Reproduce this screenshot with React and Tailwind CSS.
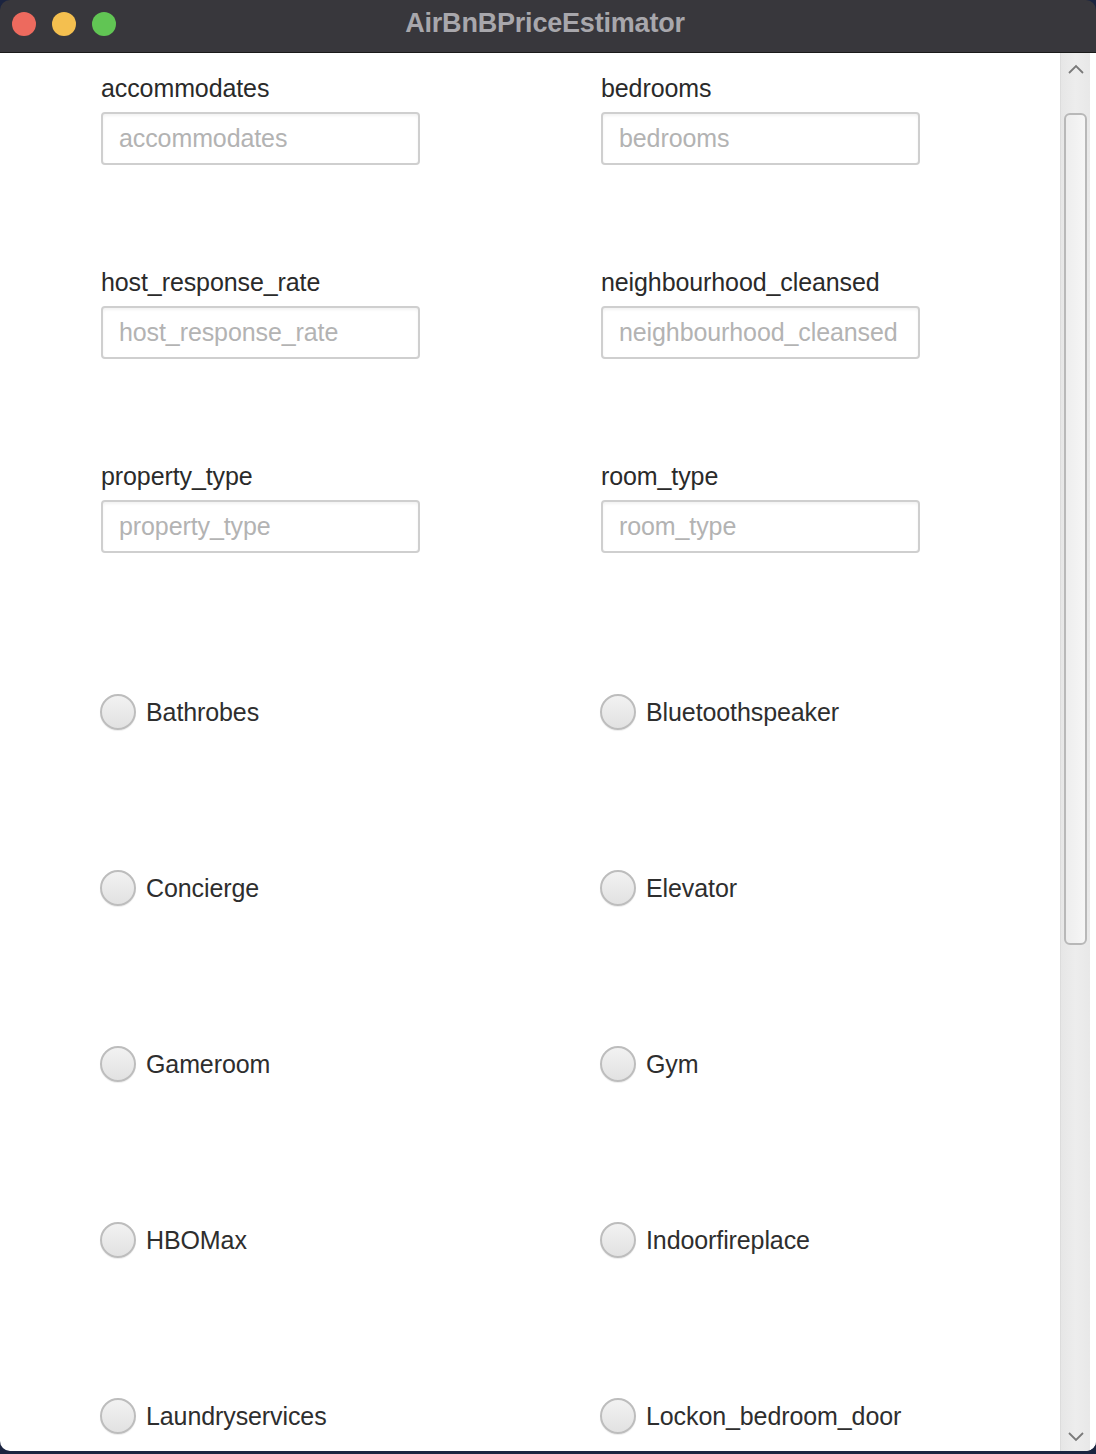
import React from "react";

const fields = [
  ["accommodates", "bedrooms"],
  ["host_response_rate", "neighbourhood_cleansed"],
  ["property_type", "room_type"],
];

const radios = [
  ["Bathrobes", "Bluetoothspeaker"],
  ["Concierge", "Elevator"],
  ["Gameroom", "Gym"],
  ["HBOMax", "Indoorfireplace"],
  ["Laundryservices", "Lockon_bedroom_door"],
];

function Field({ name }) {
  return (
    <div className="flex flex-col w-[500px] shrink-0">
      <div className="h-[28px] leading-[29px] text-[25px] text-[#2a2a2a] tracking-[-0.1px] whitespace-nowrap">{name}</div>
      <div className="mt-[10px] w-[319px] h-[53px] rounded-[4px] border-2 border-[#cfcfcf] bg-white flex items-center pl-[16px] text-[25px] text-[#b3b3b3] tracking-[-0.1px] whitespace-nowrap shadow-[inset_0_2px_3px_rgba(0,0,0,0.05)]">
        {name}
      </div>
    </div>
  );
}

function Radio({ name }) {
  return (
    <div className="flex items-center w-[500px] h-[36px] shrink-0 ml-[-1px] mr-[1px]">
      <div className="w-[36px] h-[36px] rounded-full border-2 border-[#bdbdbd] bg-gradient-to-b from-[#f2f2f2] to-[#e2e2e2] shadow-[0_1px_1px_rgba(0,0,0,0.08)]" />
      <div className="ml-[10px] text-[25px] leading-[38px] text-[#2e2e2e] tracking-[-0.1px] whitespace-nowrap">{name}</div>
    </div>
  );
}

export default function App() {
  return (
    <div className="w-[1096px] h-[1454px] bg-[#1b2440] flex flex-col overflow-hidden" style={{ fontFamily: '"Liberation Sans", Arial, sans-serif' }}>
      <div className="h-[53px] shrink-0 bg-[#38373c] rounded-t-[10px] relative flex items-center border-b border-[#1a1a1a]">
        <div className="flex gap-[16px] pl-[12px] mt-[-4px]">
          <div className="w-[24px] h-[24px] rounded-full bg-[#ed6a5e]" />
          <div className="w-[24px] h-[24px] rounded-full bg-[#f4bf4f]" />
          <div className="w-[24px] h-[24px] rounded-full bg-[#61c554]" />
        </div>
        <div className="absolute left-0 right-0 top-0 h-[46px] flex items-center justify-center text-[#a8a7ac] font-bold text-[27px] tracking-[-0.2px]">
          <span className="mr-[6px]">AirBnBPriceEstimator</span>
        </div>
      </div>
      <div className="flex-1 flex bg-white rounded-b-[10px] mb-[3px] overflow-hidden">
        <div className="flex-1 min-w-0 overflow-hidden pl-[101px] pt-[21px] flex flex-col">
          <div className="flex flex-col gap-[103px]">
            {fields.map((row, i) => (
              <div key={i} className="flex">
                <Field name={row[0]} />
                <Field name={row[1]} />
              </div>
            ))}
          </div>
          <div className="flex flex-col gap-[140px] mt-[141px]">
            {radios.map((row, i) => (
              <div key={i} className="flex">
                <Radio name={row[0]} />
                <Radio name={row[1]} />
              </div>
            ))}
          </div>
        </div>
        <div className="w-[30px] shrink-0 bg-gradient-to-r from-[#e6e6e6] via-[#ededed] to-[#e8e8e8] border-l border-[#dcdcdc] flex flex-col items-center">
          <svg width="18" height="12" viewBox="0 0 18 12" className="mt-[10px]">
            <path d="M2 10 L9 3 L16 10" fill="none" stroke="#7a7a7a" strokeWidth="1.8" />
          </svg>
          <div className="mt-[38px] w-[23px] h-[832px] rounded-[6px] border-2 border-[#b8b8b8] bg-gradient-to-r from-[#ededed] to-[#f6f6f6]" />
          <div className="flex-1" />
          <svg width="18" height="12" viewBox="0 0 18 12" className="mb-[8px]">
            <path d="M2 2 L9 9 L16 2" fill="none" stroke="#7a7a7a" strokeWidth="1.8" />
          </svg>
        </div>
        <div className="w-[6px] shrink-0 bg-white" />
      </div>
    </div>
  );
}
